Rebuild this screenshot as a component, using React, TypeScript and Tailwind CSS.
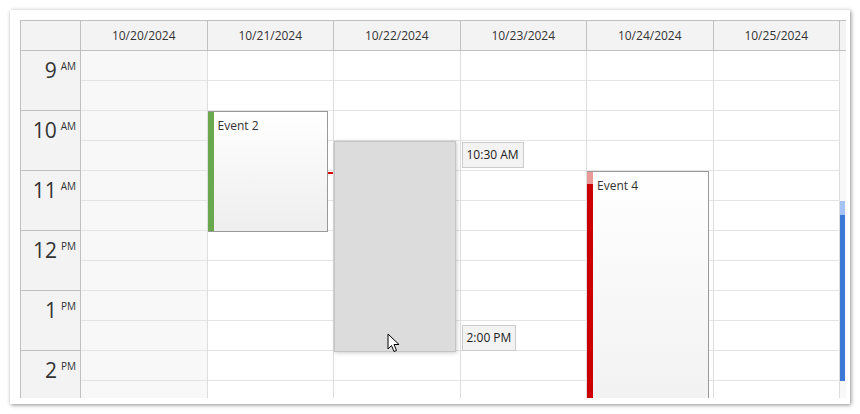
const days = ["10/20/2024", "10/21/2024", "10/22/2024", "10/23/2024", "10/24/2024", "10/25/2024"];
const hours = [
  { h: "9", m: "AM" },
  { h: "10", m: "AM" },
  { h: "11", m: "AM" },
  { h: "12", m: "PM" },
  { h: "1", m: "PM" },
  { h: "2", m: "PM" },
];
const slots = Array.from({ length: 12 });

const Cursor = () => (
  <svg width="14" height="20" viewBox="0 0 14 20" className="absolute left-[53px] top-[282px]">
    <path d="M1 1 L1 16 L4.5 12.5 L7 18.5 L9.5 17.5 L7 11.5 L12 11.5 Z" fill="#fff" stroke="#000" strokeWidth="1" strokeLinejoin="round" />
  </svg>
);

const TimeTag = ({ text, top }: { text: string; top: string }) => (
  <div className={`absolute left-[1px] ${top} h-[26px] px-[4px] flex items-center bg-[#f3f3f3] border border-[#cccccc] text-[12px] text-[#222]`}>
    {text}
  </div>
);

const App = () => {
  return (
    <div className="w-[860px] h-[414px] bg-white p-[10px] font-['Open_Sans',sans-serif]">
      <div className="w-[840px] h-[394px] bg-white p-[10px] shadow-[1px_1px_4px_rgba(0,0,0,0.45)]">
        <div className="w-[826px] h-[378px] overflow-hidden border-l border-t border-[#c0c0c0] flex flex-col">
          {/* header */}
          <div className="h-[30px] shrink-0 flex bg-[#f3f3f3] border-b border-[#c0c0c0] text-[12px] text-[#333]">
            <div className="w-[60px] shrink-0 border-r border-[#c0c0c0]" />
            <div className="flex-1 grid grid-cols-6">
              {days.map((d) => (
                <div key={d} className="flex items-center justify-center border-r border-[#c0c0c0]">
                  {d}
                </div>
              ))}
            </div>
            <div className="w-[6px] shrink-0" />
          </div>

          {/* body */}
          <div className="flex-1 flex overflow-hidden">
            <div className="w-[60px] shrink-0 bg-[#f3f3f3] border-r border-[#c0c0c0] text-[#333]">
              {hours.map((t) => (
                <div key={t.h} className="h-[60px] border-b border-[#c0c0c0] flex justify-end pr-[4px] pt-[7px]">
                  <span className="text-[21px] leading-[24px]">{t.h}</span>
                  <span className="text-[10px] leading-[14px] ml-[4px] mt-[1px]">{t.m}</span>
                </div>
              ))}
            </div>

            <div className="flex-1 grid grid-cols-6">
              {days.map((d, i) => (
                <div key={d} className={`relative border-r border-[#dddddd] ${i === 0 ? "bg-[#f8f8f8]" : "bg-white"}`}>
                  {slots.map((_, s) => (
                    <div key={s} className="h-[30px] border-b border-[#e4e4e4]" />
                  ))}

                  {i === 1 && (
                    <>
                      <div className="absolute left-0 right-0 top-[121px] h-[2px] bg-[#e00000]" />
                      <div className="absolute left-0 right-[5px] top-[60px] h-[121px] flex border border-l-0 border-[#999999] bg-gradient-to-b from-white to-[#eeeeee]">
                        <div className="w-[6px] bg-[#6aa84f]" />
                        <div className="pl-[4px] pt-[5px] text-[12px] text-[#333]">Event 2</div>
                      </div>
                    </>
                  )}

                  {i === 2 && (
                    <>
                      <div className="absolute left-0 right-[4px] top-[90px] h-[211px] bg-[#dcdcdc] border border-[#c4c4c4] shadow-[1px_1px_4px_rgba(0,0,0,0.2)]" />
                      <Cursor />
                    </>
                  )}

                  {i === 3 && (
                    <>
                      <TimeTag text="10:30 AM" top="top-[91px]" />
                      <TimeTag text="2:00 PM" top="top-[274px]" />
                    </>
                  )}

                  {i === 4 && (
                    <div className="absolute left-0 right-[4px] top-[120px] h-[300px] flex border border-l-0 border-[#999999] bg-gradient-to-b from-white to-[#eeeeee]">
                      <div className="w-[6px] flex flex-col">
                        <div className="h-[12px] bg-[#ea9999]" />
                        <div className="flex-1 bg-[#cc0000]" />
                      </div>
                      <div className="pl-[4px] pt-[5px] text-[12px] text-[#333]">Event 4</div>
                    </div>
                  )}
                </div>
              ))}
            </div>

            <div className="w-[6px] shrink-0 bg-[#f8f8f8] flex flex-col">
              <div className="h-[150px]" />
              <div className="w-[5px] h-[14px] bg-[#a4c2f4]" />
              <div className="w-[5px] h-[166px] bg-[#3c78d8]" />
            </div>
          </div>
        </div>
      </div>
    </div>
  );
};

export default App;
